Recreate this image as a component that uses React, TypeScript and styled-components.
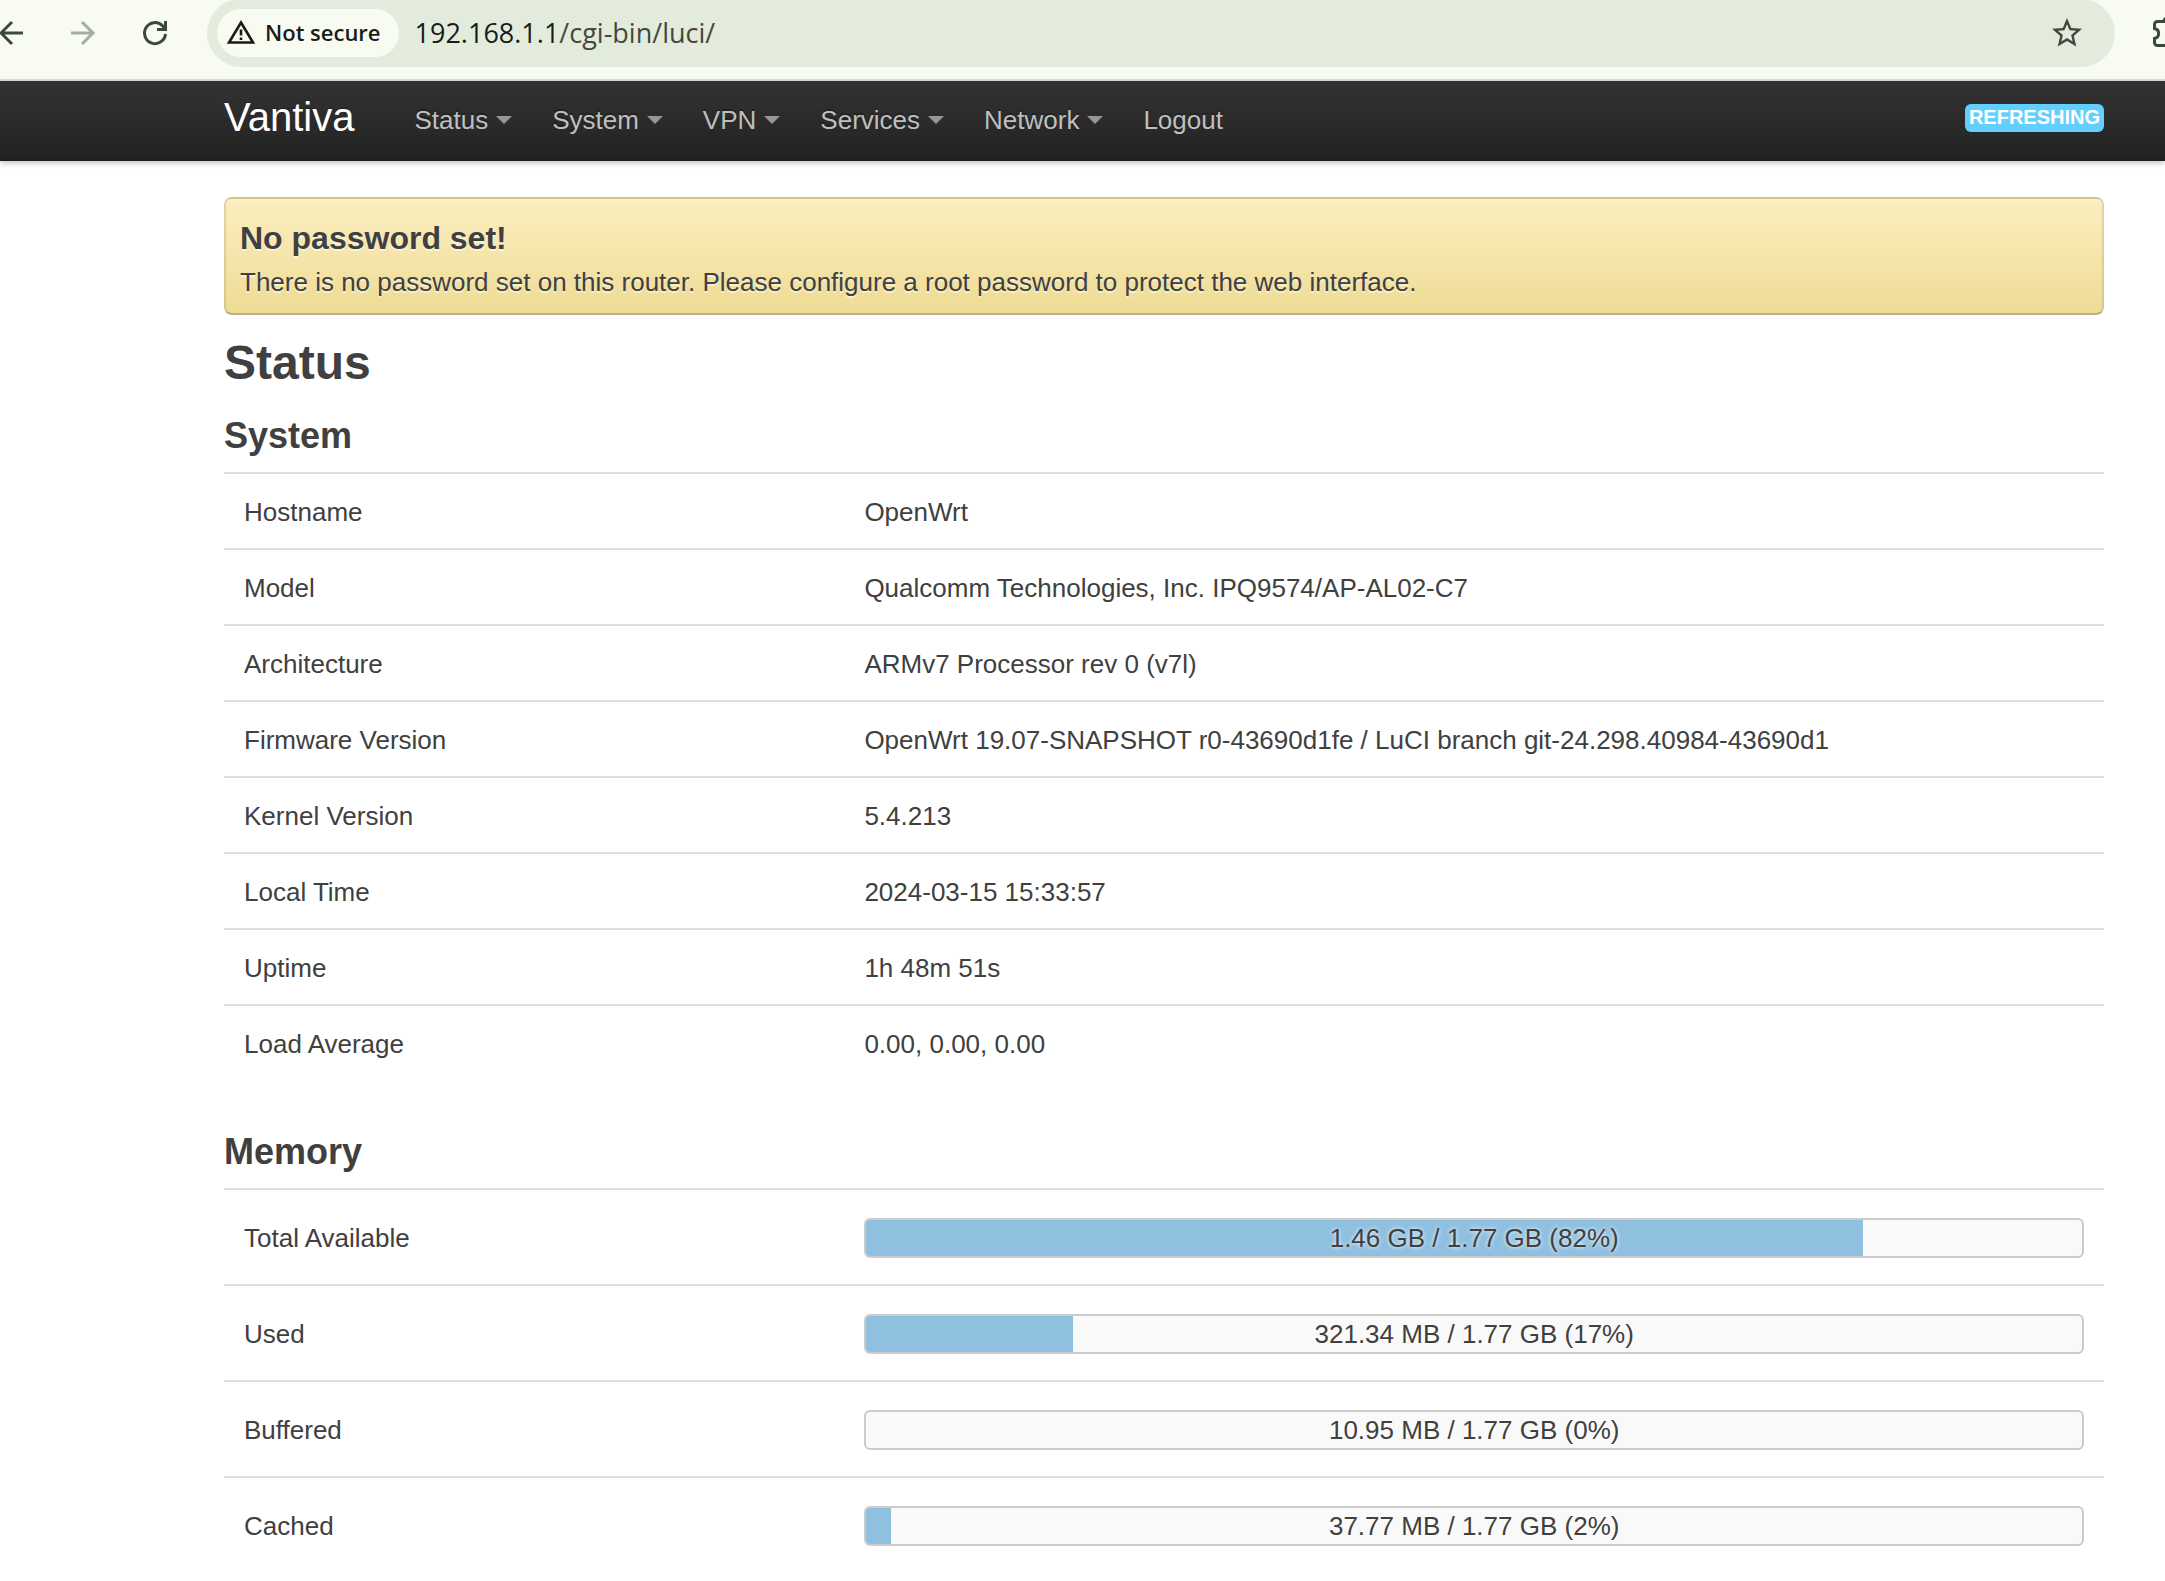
import React from 'react';
import styled, { createGlobalStyle } from 'styled-components';

const GlobalStyle = createGlobalStyle`
  *, *::before, *::after { box-sizing: border-box; }
  body {
    margin: 0;
    background: #fff;
    color: #404040;
    font: 26px/36px "Liberation Sans", Arial, sans-serif;
  }
`;

const Toolbar = styled.div`
  display: flex;
  align-items: flex-start;
  height: 81px;
  background: #f8fbf1;
  border-bottom: 2px solid #dde4d6;
  overflow: hidden;
`;

const ToolButtons = styled.div`
  display: flex;
  flex: none;
  align-items: center;
  gap: 40px;
  width: 207px;
  height: 66px;
  margin-left: -4px;
`;

const ToolButton = styled.button<{ $faded?: boolean }>`
  display: flex;
  flex: none;
  padding: 0;
  border: 0;
  background: none;
  color: ${(p) => (p.$faded ? '#a7aca2' : '#3b4a37')};
`;

const AddressBar = styled.div`
  display: flex;
  flex: 1;
  align-items: center;
  height: 68px;
  margin: -1px 38px 0 4px;
  padding: 0 30px 0 10px;
  border-radius: 34px;
  background: #e3ecdc;
  font-family: "Open Sans", "Noto Sans", sans-serif;
`;

const SecurityChip = styled.button`
  display: flex;
  flex: none;
  align-items: center;
  gap: 9px;
  height: 48px;
  padding: 0 18px 2px 9px;
  border: 0;
  border-radius: 24px;
  background: #f8fbf1;
  color: #1a1c18;
  font: 600 22px/32px "Open Sans", "Noto Sans", sans-serif;
`;

const Url = styled.div`
  flex: 1;
  padding-left: 16px;
  color: #454840;
  font-size: 27px;
  line-height: 36px;

  b { color: #1a1c18; font-weight: 400; }
`;

const ExtensionSlot = styled.div`
  display: flex;
  flex: none;
  align-items: center;
  width: 12px;
  height: 66px;
`;

const Navbar = styled.header`
  display: flex;
  align-items: center;
  height: 80px;
  padding: 0 61px 0 224px;
  background: linear-gradient(#333, #222);
  box-shadow: 0 2px 6px rgba(0, 0, 0, 0.25), inset 0 -2px 0 rgba(0, 0, 0, 0.1);
`;

const Brand = styled.a`
  padding: 0 40px 8px 0;
  color: #fff;
  font-size: 40px;
  line-height: 40px;
  text-decoration: none;
  text-shadow: 0 -1px 0 rgba(0, 0, 0, 0.25);
`;

const Menu = styled.nav`
  display: flex;
  flex: 1;
  padding-bottom: 2px;
`;

const MenuLink = styled.a`
  display: flex;
  align-items: center;
  gap: 8px;
  padding: 0 20px;
  color: #bfbfbf;
  text-decoration: none;
  text-shadow: 0 -2px 0 rgba(0, 0, 0, 0.25);
`;

const Caret = styled.span`
  border-top: 8px solid #969696;
  border-right: 8px solid transparent;
  border-left: 8px solid transparent;
`;

const Badge = styled.button`
  height: 28px;
  margin-bottom: 6px;
  padding: 0 4px 2px;
  border: 0;
  border-radius: 6px;
  background: #62cffc;
  color: #fff;
  font: bold 20px/24px "Liberation Sans", Arial, sans-serif;
`;

const Main = styled.main`
  padding: 36px 61px 0 224px;
`;

const Alert = styled.section`
  padding: 21px 14px 13px;
  border: 2px solid;
  border-color: rgba(0, 0, 0, 0.1) rgba(0, 0, 0, 0.1) rgba(0, 0, 0, 0.25);
  border-radius: 8px;
  background: linear-gradient(#fceec1, #eedc94);
  box-shadow: inset 0 2px 0 rgba(255, 255, 255, 0.25);
  text-shadow: 0 2px 0 rgba(255, 255, 255, 0.5);

  h4 { margin: 0; padding-bottom: 8px; font-size: 32px; line-height: 36px; }
  p { margin: 0; }
`;

const Title = styled.h2`
  margin: 12px 0 0;
  padding-bottom: 1px;
  font-size: 48px;
  line-height: 72px;
`;

const Block = styled.section`
  & + & { margin-top: 36px; }
`;

const BlockTitle = styled.h3`
  margin: 0;
  font-size: 36px;
  line-height: 72px;
`;

const DataTable = styled.table`
  width: 100%;
  border-collapse: separate;
  border-spacing: 0;
  table-layout: fixed;
`;

const LabelCell = styled.th<{ $tall?: boolean }>`
  width: 33%;
  padding: ${(p) => (p.$tall ? '28px 20px 26px' : '20px 20px 18px')};
  border-top: 2px solid #ddd;
  font-weight: 400;
  text-align: left;
  vertical-align: middle;
`;

const ValueCell = styled.td<{ $tall?: boolean }>`
  padding: ${(p) => (p.$tall ? '28px 20px 26px' : '20px 20px 18px')};
  border-top: 2px solid #ddd;
  vertical-align: middle;
`;

const Meter = styled.div`
  display: grid;
  overflow: hidden;
  border: 2px solid #ccc;
  border-radius: 6px;
  background: #f9f9f9;

  > * { grid-area: 1 / 1; }
`;

const MeterFill = styled.div`
  background: #90c0e0;
`;

const MeterText = styled.span`
  text-align: center;
  text-shadow: 0 0 4px #fff;
`;

const menu = [
  { name: 'Status', more: true },
  { name: 'System', more: true },
  { name: 'VPN', more: true },
  { name: 'Services', more: true },
  { name: 'Network', more: true },
  { name: 'Logout', more: false },
];

const system = [
  ['Hostname', 'OpenWrt'],
  ['Model', 'Qualcomm Technologies, Inc. IPQ9574/AP-AL02-C7'],
  ['Architecture', 'ARMv7 Processor rev 0 (v7l)'],
  ['Firmware Version', 'OpenWrt 19.07-SNAPSHOT r0-43690d1fe / LuCI branch git-24.298.40984-43690d1'],
  ['Kernel Version', '5.4.213'],
  ['Local Time', '2024-03-15 15:33:57'],
  ['Uptime', '1h 48m 51s'],
  ['Load Average', '0.00, 0.00, 0.00'],
];

const memory = [
  { name: 'Total Available', amount: '1.46 GB / 1.77 GB', percent: 82 },
  { name: 'Used', amount: '321.34 MB / 1.77 GB', percent: 17 },
  { name: 'Buffered', amount: '10.95 MB / 1.77 GB', percent: 0 },
  { name: 'Cached', amount: '37.77 MB / 1.77 GB', percent: 2 },
];

const BackIcon = () => (
  <svg width="32" height="32" viewBox="0 0 32 32" fill="none" stroke="currentColor" strokeWidth="3">
    <path d="M27 16H6M16 5 5 16l11 11" />
  </svg>
);

const ForwardIcon = () => (
  <svg width="32" height="32" viewBox="0 0 32 32" fill="none" stroke="currentColor" strokeWidth="3">
    <path d="M3 16h21M14 5l11 11-11 11" />
  </svg>
);

const ReloadIcon = () => (
  <svg width="32" height="32" viewBox="0 0 32 32" fill="none" stroke="currentColor" strokeWidth="3">
    <path d="M25.500 17A10.500 10.500 0 1 1 22.500 8.700L26 12.500M25.500 4v8.500H17" />
  </svg>
);

const WarningIcon = () => (
  <svg width="30" height="26" viewBox="0 0 30 26" fill="none" stroke="currentColor" strokeWidth="2.600">
    <path d="M15 3.500 27 23.500H3Z" />
    <path d="M15 10.500v6M15 18.500v2.600" />
  </svg>
);

const StarIcon = () => (
  <svg width="36" height="36" viewBox="0 0 24 24" fill="#454840">
    <path d="m22 9.240-7.190-.62L12 2 9.190 8.630 2 9.240l5.460 4.730L5.820 21 12 17.270 18.180 21l-1.630-7.030L22 9.240zM12 15.400l-3.760 2.270 1-4.280-3.320-2.880 4.380-.38L12 6.100l1.710 4.040 4.380.38-3.320 2.880 1 4.280L12 15.400z" />
  </svg>
);

const PuzzleIcon = () => (
  <svg width="36" height="36" viewBox="0 0 36 36" fill="none" stroke="currentColor" strokeWidth="3">
    <path d="M11 6.500H4.500a3 3 0 0 0-3 3v4c5.500 1 5.500 9 0 10v4a3 3 0 0 0 3 3H26v-21a3 3 0 0 0-3-3h-4c0-5-8-5-8 0Z" />
  </svg>
);

export default function App() {
  return (
    <>
      <GlobalStyle />
      <Toolbar>
        <ToolButtons>
          <ToolButton aria-label="Back"><BackIcon /></ToolButton>
          <ToolButton aria-label="Forward" $faded><ForwardIcon /></ToolButton>
          <ToolButton aria-label="Reload"><ReloadIcon /></ToolButton>
        </ToolButtons>
        <AddressBar>
          <SecurityChip><WarningIcon />Not secure</SecurityChip>
          <Url><b>192.168.1.1</b>/cgi-bin/luci/</Url>
          <ToolButton aria-label="Bookmark this page"><StarIcon /></ToolButton>
        </AddressBar>
        <ExtensionSlot>
          <ToolButton aria-label="Extensions"><PuzzleIcon /></ToolButton>
        </ExtensionSlot>
      </Toolbar>
      <Navbar>
        <Brand href="#">Vantiva</Brand>
        <Menu>
          {menu.map((item) => (
            <MenuLink href="#" key={item.name}>
              {item.name}
              {item.more && <Caret />}
            </MenuLink>
          ))}
        </Menu>
        <Badge>REFRESHING</Badge>
      </Navbar>
      <Main>
        <Alert>
          <h4>No password set!</h4>
          <p>There is no password set on this router. Please configure a root password to protect the web interface.</p>
        </Alert>
        <Title>Status</Title>
        <Block>
          <BlockTitle>System</BlockTitle>
          <DataTable>
            <tbody>
              {system.map(([name, value]) => (
                <tr key={name}>
                  <LabelCell scope="row">{name}</LabelCell>
                  <ValueCell>{value}</ValueCell>
                </tr>
              ))}
            </tbody>
          </DataTable>
        </Block>
        <Block>
          <BlockTitle>Memory</BlockTitle>
          <DataTable>
            <tbody>
              {memory.map((row) => (
                <tr key={row.name}>
                  <LabelCell scope="row" $tall>{row.name}</LabelCell>
                  <ValueCell $tall>
                    <Meter role="progressbar" aria-label={row.name} aria-valuenow={row.percent}>
                      <MeterFill style={{ width: `${row.percent}%` }} />
                      <MeterText>{`${row.amount} (${row.percent}%)`}</MeterText>
                    </Meter>
                  </ValueCell>
                </tr>
              ))}
            </tbody>
          </DataTable>
        </Block>
      </Main>
    </>
  );
}
